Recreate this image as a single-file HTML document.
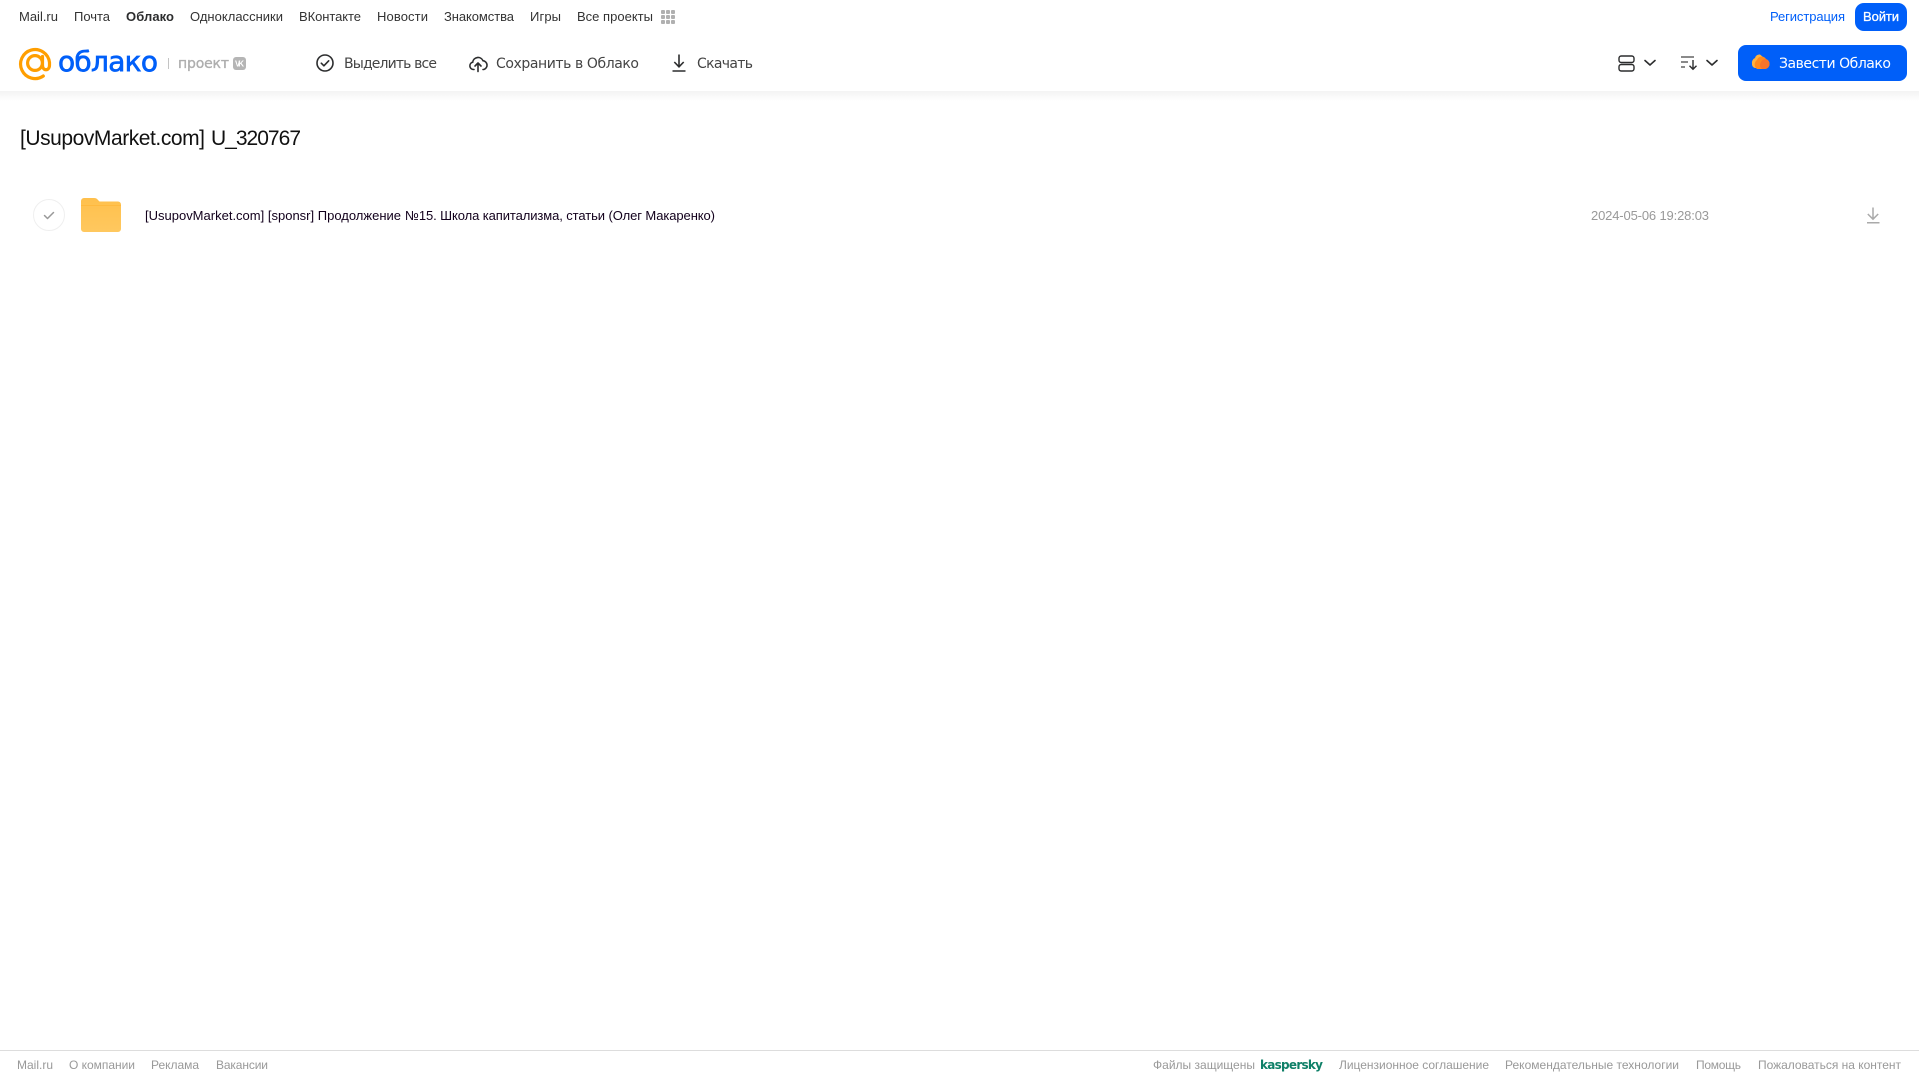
<!DOCTYPE html>
<html lang="ru"><head><meta charset="utf-8"><title>Облако</title>
<style>
html,body{margin:0;padding:0;background:#fff;width:1919px;height:1079px;overflow:hidden}
svg{display:block}
text{font-family:"Liberation Sans",Arial,sans-serif}
.g{font-family:"DejaVu Sans","Liberation Sans",sans-serif}
</style></head><body>
<svg width="1919" height="1079" viewBox="0 0 1919 1079" xmlns="http://www.w3.org/2000/svg">
<defs><linearGradient id="sh" x1="0" y1="0" x2="0" y2="1"><stop offset="0" stop-color="#f3f3f3"/><stop offset="1" stop-color="#fff"/></linearGradient>
<linearGradient id="fo" x1="0" y1="0" x2="0" y2="1"><stop offset="0" stop-color="#ffc04c"/><stop offset="1" stop-color="#ffc85f"/></linearGradient></defs>
<rect x="0" y="91" width="1919" height="10" fill="url(#sh)"/>

<g font-size="13" fill="#333">
<text x="19" y="21" textLength="39">Mail.ru</text>
<text x="74" y="21" textLength="36">Почта</text>
<text x="126" y="21" textLength="48" font-weight="700" fill="#2c2d2e">Облако</text>
<text x="190" y="21" textLength="93">Одноклассники</text>
<text x="299" y="21" textLength="62">ВКонтакте</text>
<text x="377" y="21" textLength="51">Новости</text>
<text x="444" y="21" textLength="70">Знакомства</text>
<text x="530" y="21" textLength="31">Игры</text>
<text x="577" y="21" textLength="76">Все проекты</text>
</g>
<g fill="#b0b0b0">
<rect x="661" y="10" width="4" height="4" rx="1"/><rect x="666" y="10" width="4" height="4" rx="1"/><rect x="671" y="10" width="4" height="4" rx="1"/>
<rect x="661" y="15" width="4" height="4" rx="1"/><rect x="666" y="15" width="4" height="4" rx="1"/><rect x="671" y="15" width="4" height="4" rx="1"/>
<rect x="661" y="20" width="4" height="4" rx="1"/><rect x="666" y="20" width="4" height="4" rx="1"/><rect x="671" y="20" width="4" height="4" rx="1"/>
</g>

<text x="1770" y="21" font-size="13" fill="#005ff9" textLength="75">Регистрация</text>
<rect x="1855" y="3" width="52" height="28" rx="9" fill="#005ff9"/>
<text x="1863" y="21" font-size="13" fill="#fff" stroke="#fff" stroke-width=".3" textLength="36">Войти</text>

<path d="M43.300 76A14.500 14.500 0 1 1 49.500 62.500v2.500c0 6.300-7 6.300-7 0v-8.500" fill="none" stroke="#ff9e00" stroke-width="3.200" stroke-linecap="round"/>
<circle cx="35" cy="63" r="7.400" fill="none" stroke="#ff9e00" stroke-width="3.200"/>
<text class="g" x="58" y="71" font-size="28" fill="#005ff9" stroke="#005ff9" stroke-width=".7" textLength="100">облако</text>
<rect x="168" y="58" width="1" height="11" fill="#c4c4c4"/>
<text class="g" x="178" y="68" font-size="14" fill="#aeaeae" stroke="#aeaeae" stroke-width=".35" textLength="51">проект</text>
<rect x="233" y="57" width="13" height="13" rx="3" fill="#b5b5b5"/>
<text x="235" y="66.500" font-size="8" font-weight="700" fill="#fff" textLength="9">VK</text>

<g class="g" font-size="14" fill="#444">
<text class="g" x="344" y="68" textLength="93">Выделить все</text>
<text class="g" x="496" y="68" textLength="143">Сохранить в Облако</text>
<text class="g" x="697" y="68" textLength="56">Скачать</text>
</g>
<circle cx="325" cy="63" r="8" fill="none" stroke="#2c2d2e" stroke-width="1.600"/>
<path d="M321.300 63.200l2.600 2.600 4.800-5" fill="none" stroke="#2c2d2e" stroke-width="1.600" stroke-linecap="round" stroke-linejoin="round"/>
<path d="M474 69.500h-.5a3.700 3.700 0 0 1-.8-7.300 5.400 5.400 0 0 1 10.300-1.500 4.500 4.500 0 0 1 .8 8.800h-.8" fill="none" stroke="#2c2d2e" stroke-width="1.600" stroke-linecap="round"/>
<path d="M478 71.500v-8.500M475 66l3-3 3 3" fill="none" stroke="#2c2d2e" stroke-width="1.600" stroke-linecap="round" stroke-linejoin="round"/>
<path d="M679 54.500v12M674.300 62l4.700 4.800 4.700-4.800M672.500 71h13" fill="none" stroke="#2c2d2e" stroke-width="1.600"/>

<rect x="1619" y="56" width="15" height="6.500" rx="2.200" fill="none" stroke="#2c2d2e" stroke-width="1.400"/>
<rect x="1619" y="64.500" width="15" height="6.500" rx="2.200" fill="none" stroke="#2c2d2e" stroke-width="1.400"/>
<path d="M1645 60.500l5 4.500 5-4.500M1707 60.500l5 4.500 5-4.500" fill="none" stroke="#2c2d2e" stroke-width="1.600" stroke-linecap="round" stroke-linejoin="round"/>
<path d="M1681 57h13M1681 62h7M1681 67h4" fill="none" stroke="#444" stroke-width="1.300"/>
<path d="M1693 60v9M1689.500 65.700l3.500 3.500 3.500-3.500" fill="none" stroke="#2c2d2e" stroke-width="1.400"/>

<rect x="1738" y="45" width="169" height="36" rx="8" fill="#005ff9"/>
<path d="M1752 63.500a5 5 0 0 1 3-5.500 4.500 4.500 0 0 1 5-3.500l3 2.500v11h-8a4 4 0 0 1-3-4.500z" fill="#ffb340"/>
<path d="M1757 69a5.500 5.500 0 0 1 0-9 5 5 0 0 1 9-1 5 5 0 0 1 3.500 5.200 5 5 0 0 1-4.500 4.800z" fill="#ff8a1f"/>
<path d="M1762 69a5 5 0 0 1-1-7 4.500 4.500 0 0 1 5.500-2.500 5 5 0 0 1 3 4.700 5 5 0 0 1-4.500 4.800z" fill="#f8742a"/>
<text class="g" x="1779" y="68" font-size="14" fill="#fff" textLength="112">Завести Облако</text>

<text x="20" y="145" font-size="21" fill="#111" textLength="185">[UsupovMarket.com]</text>
<text x="211" y="145" font-size="21" fill="#111" textLength="90">U_320767</text>

<circle cx="49" cy="215" r="15.500" fill="#fff" stroke="#efefef" stroke-width="1"/>
<path d="M44.500 215.500l3 3 6-6" fill="none" stroke="#999" stroke-width="1.500" stroke-linecap="round" stroke-linejoin="round"/>
<path d="M81 201a3 3 0 0 1 3-3h10c2 0 3 .8 4 2l1.500 1.500H118a3 3 0 0 1 3 3V229a3 3 0 0 1-3 3H84a3 3 0 0 1-3-3z" fill="url(#fo)"/>
<rect x="81" y="205" width="40" height="1" fill="#ffb93f"/>
<text x="145" y="220" font-size="13" fill="#12001c" textLength="256">[UsupovMarket.com] [sponsr] Продолжение</text>
<text x="405" y="220" font-size="13" fill="#12001c" textLength="310">№15. Школа капитализма, статьи (Олег Макаренко)</text>
<text x="1591" y="220" font-size="13" fill="#999" textLength="118">2024-05-06 19:28:03</text>
<path d="M1873 207.500v11.500M1867.800 214l5.200 5.200 5.200-5.200" fill="none" stroke="#aaa" stroke-width="1.500"/>
<rect x="1867" y="222" width="12.500" height="1.500" fill="#aaa"/>

<rect x="0" y="1050" width="1919" height="1" fill="#ddd"/>
<g font-size="12" fill="#999">
<text x="17" y="1069" textLength="36">Mail.ru</text>
<text x="69" y="1069" textLength="66">О компании</text>
<text x="151" y="1069" textLength="48">Реклама</text>
<text x="216" y="1069" textLength="52">Вакансии</text>
<text x="1153" y="1069" textLength="102">Файлы защищены</text>
<text x="1339" y="1069" textLength="150">Лицензионное соглашение</text>
<text x="1505" y="1069" textLength="174">Рекомендательные технологии</text>
<text x="1696" y="1069" textLength="45">Помощь</text>
<text x="1758" y="1069" textLength="143">Пожаловаться на контент</text>
</g>
<text class="g" x="1260" y="1069" font-size="12" font-weight="700" fill="#0f8068" textLength="63">kaspersky</text>
</svg>
</body></html>
